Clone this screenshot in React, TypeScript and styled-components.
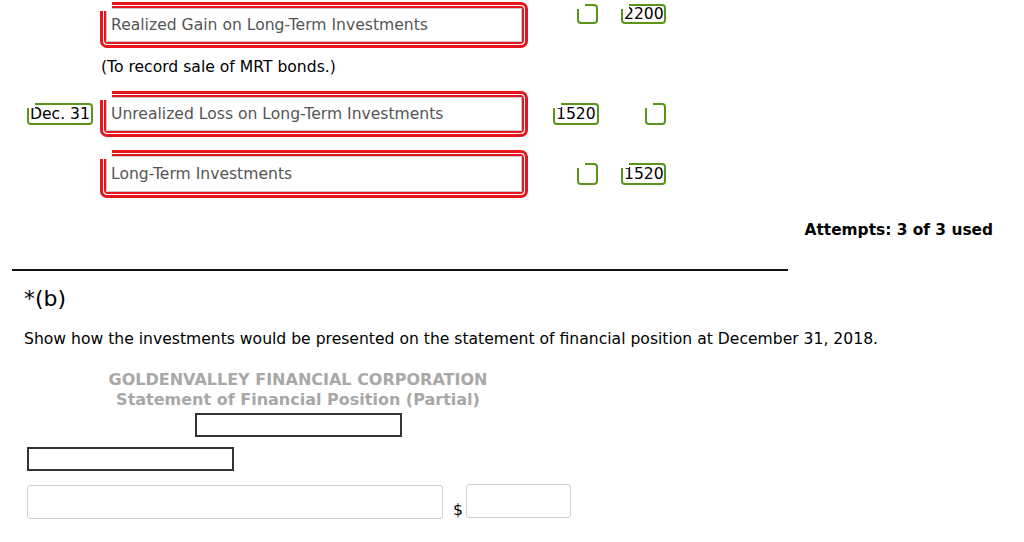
import React from "react";
import styled, { createGlobalStyle } from "styled-components";

const Global = createGlobalStyle`
  html, body { margin: 0; padding: 0; background: #fff; }
  body {
    font-family: "DejaVu Sans", Verdana, sans-serif;
    font-size: 15.6px;
    color: #000;
  }
`;

const RED = "#e8141c";
const GREEN = "#5a9418";

const Page = styled.div`
  width: 1024px;
  height: 542px;
  overflow: hidden;
  display: flex;
  flex-direction: column;
`;

const Journal = styled.div`
  display: flex;
  flex-direction: column;
  padding-top: 2px;
`;

const EntryRow = styled.div<{ $mt?: number }>`
  display: grid;
  grid-template-columns: 100px 428px 71px 67px;
  margin-top: ${(p) => p.$mt ?? 0}px;
`;

const Cell = styled.div<{ $align?: string; $mt?: number; $mr?: number }>`
  display: flex;
  justify-content: flex-end;
  align-self: ${(p) => p.$align ?? "center"};
  margin-top: ${(p) => p.$mt ?? 0}px;
  margin-right: ${(p) => p.$mr ?? 0}px;
`;

const RedFrame = styled.div`
  border: 3px solid ${RED};
  border-radius: 7px;
  padding: 1px;
  background: #fff;
  clip-path: polygon(12px 0, 100% 0, 100% 100%, 0 100%, 0 9px, 12px 9px);
`;

const RedInner = styled.div`
  border: 2px solid ${RED};
  border-radius: 4px;
`;

const AccountField = styled.div<{ $h: number }>`
  height: ${(p) => p.$h}px;
  box-sizing: border-box;
  border: 1px solid #c9c9c9;
  display: flex;
  align-items: center;
  padding-left: 4px;
  color: #555;
  font-size: 15.6px;
  white-space: nowrap;
`;

const GreenBox = styled.div<{ $w: number; $h: number }>`
  width: ${(p) => p.$w}px;
  height: ${(p) => p.$h}px;
  box-sizing: border-box;
  border: 2px solid ${GREEN};
  border-radius: 4px;
  display: flex;
  align-items: center;
  padding-left: 1px;
  font-size: 15.6px;
  color: #000;
  white-space: nowrap;
  clip-path: polygon(8px 0, 100% 0, 100% 100%, 0 100%, 0 5px, 8px 5px);
`;

const Memo = styled.div`
  padding-left: 101px;
  margin-top: 9px;
  line-height: 20px;
`;

const Attempts = styled.div`
  align-self: flex-end;
  margin-right: 31px;
  margin-top: 23px;
  font-weight: bold;
  font-size: 15.4px;
  line-height: 18px;
`;

const Rule = styled.div`
  width: 776px;
  height: 2px;
  background: #111;
  margin: 30px 0 0 12px;
`;

const PartLabel = styled.div`
  margin: 15px 0 0 24px;
  font-size: 22px;
  line-height: 26px;
`;

const Prompt = styled.div`
  margin: 17px 0 0 24px;
  line-height: 20px;
`;

const Statement = styled.div`
  width: 548px;
  margin: 21px 0 0 24px;
  display: flex;
  flex-direction: column;
  align-items: center;
`;

const Title = styled.div`
  color: #a8a8a8;
  font-weight: bold;
  font-size: 16px;
  line-height: 20px;
  text-align: center;
`;

const DarkBox = styled.div<{ $w: number }>`
  width: ${(p) => p.$w}px;
  height: 24px;
  box-sizing: border-box;
  border: 2px solid #333;
  background: #fff;
`;

const HeaderBox = styled(DarkBox)`
  margin-top: 3px;
`;

const SectionBox = styled(DarkBox)`
  margin: 10px 0 0 27px;
`;

const AmountRow = styled.div`
  display: flex;
  align-items: flex-end;
  margin: 13px 0 0 27px;
`;

const LightInput = styled.div<{ $w: number; $h: number; $lift?: number }>`
  width: ${(p) => p.$w}px;
  height: ${(p) => p.$h}px;
  box-sizing: border-box;
  border: 1px solid #d0d0d0;
  border-radius: 3px;
  background: #fff;
  margin-bottom: ${(p) => p.$lift ?? 0}px;
`;

const Dollar = styled.span`
  margin: 0 3px 0 10px;
  font-size: 15.6px;
  line-height: 18px;
`;

export default function App() {
  return (
    <Page>
      <Global />
      <Journal>
        <EntryRow>
          <div />
          <RedFrame>
            <RedInner>
              <AccountField $h={34}>Realized Gain on Long-Term Investments</AccountField>
            </RedInner>
          </RedFrame>
          <Cell $align="start" $mt={2} $mr={1}>
            <GreenBox $w={21} $h={20} />
          </Cell>
          <Cell $align="start" $mt={2}>
            <GreenBox $w={45} $h={20}>2200</GreenBox>
          </Cell>
        </EntryRow>
        <Memo>(To record sale of MRT bonds.)</Memo>
        <EntryRow $mt={14}>
          <Cell $mr={7}>
            <GreenBox $w={66} $h={22}>Dec. 31</GreenBox>
          </Cell>
          <RedFrame>
            <RedInner>
              <AccountField $h={34}>Unrealized Loss on Long-Term Investments</AccountField>
            </RedInner>
          </RedFrame>
          <Cell>
            <GreenBox $w={46} $h={22}>1520</GreenBox>
          </Cell>
          <Cell>
            <GreenBox $w={21} $h={22} />
          </Cell>
        </EntryRow>
        <EntryRow $mt={13}>
          <div />
          <RedFrame>
            <RedInner>
              <AccountField $h={36}>Long-Term Investments</AccountField>
            </RedInner>
          </RedFrame>
          <Cell $mr={1}>
            <GreenBox $w={21} $h={22} />
          </Cell>
          <Cell>
            <GreenBox $w={45} $h={22}>1520</GreenBox>
          </Cell>
        </EntryRow>
      </Journal>
      <Attempts>Attempts: 3 of 3 used</Attempts>
      <Rule />
      <PartLabel>*(b)</PartLabel>
      <Prompt>
        Show how the investments would be presented on the statement of financial position at December 31, 2018.
      </Prompt>
      <Statement>
        <Title>GOLDENVALLEY FINANCIAL CORPORATION</Title>
        <Title>Statement of Financial Position (Partial)</Title>
        <HeaderBox $w={207} />
      </Statement>
      <SectionBox $w={207} />
      <AmountRow>
        <LightInput $w={416} $h={34} />
        <Dollar>$</Dollar>
        <LightInput $w={105} $h={34} $lift={1} />
      </AmountRow>
    </Page>
  );
}
